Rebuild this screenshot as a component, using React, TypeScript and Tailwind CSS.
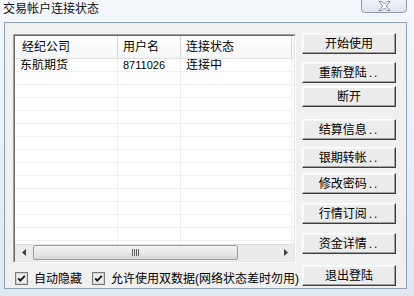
import React from 'react';

const rows = [
  { company: '东航期货', user: '8711026', status: '连接中' },
  ...Array.from({ length: 14 }, () => ({ company: '', user: '', status: '' })),
];

function Dots() {
  return <span className="ml-[2px] tracking-[2px]">..</span>;
}

function WinButton({ label, dots, className }: { label: string; dots?: boolean; className: string }) {
  return (
    <button
      className={
        'flex h-[21px] w-[94px] shrink-0 items-center justify-center border border-t-white border-l-white border-r-[#3c3c3c] border-b-[#3c3c3c] bg-[#ececec] text-[12px] leading-none text-black shadow-[inset_-1px_-1px_0_#a0a0a0,inset_1px_1px_0_#f8f8f8] ' +
        className
      }
    >
      <span>{label}</span>
      {dots && <Dots />}
    </button>
  );
}

function CheckBox() {
  return (
    <svg width="13" height="13" viewBox="0 0 13 13" className="shrink-0">
      <rect x="0.5" y="0.5" width="12" height="12" fill="#fdfdfd" stroke="#7a7a7a" />
      <rect x="1.5" y="1.5" width="10" height="10" fill="#ededed" stroke="#d4d4d4" />
      <path d="M3.2 6.4 L5.3 8.6 L9.8 3.8" fill="none" stroke="#111" strokeWidth="1.8" />
    </svg>
  );
}

function ScrollBar() {
  return (
    <div className="flex h-[17px] shrink-0 bg-[#ebebeb] shadow-[inset_0_1px_0_#e0e0e0]">
      <div className="flex w-[17px] items-center justify-center">
        <svg width="4" height="7" viewBox="0 0 4 7">
          <path d="M4 0 L0 3.5 L4 7 Z" fill="#404040" />
        </svg>
      </div>
      <div className="my-[1px] ml-[1px] flex w-[205px] items-center justify-center rounded-[2px] border border-[#9a9a9a] bg-gradient-to-b from-[#f4f4f4] via-[#e8e8e8] to-[#d6d6d6]">
        <div className="flex gap-[1px]">
          <div className="h-[7px] w-[1px] bg-[#5e5e5e]" />
          <div className="h-[7px] w-[1px] bg-[#5e5e5e]" />
          <div className="h-[7px] w-[1px] bg-[#5e5e5e]" />
          <div className="h-[7px] w-[1px] bg-[#5e5e5e]" />
        </div>
      </div>
      <div className="flex-1" />
      <div className="flex w-[17px] items-center justify-center">
        <svg width="4" height="7" viewBox="0 0 4 7">
          <path d="M0 0 L4 3.5 L0 7 Z" fill="#404040" />
        </svg>
      </div>
    </div>
  );
}

export default function App() {
  return (
    <div className="h-[296px] w-[414px] overflow-hidden bg-gradient-to-b from-[#f4f7fb] to-[#dfe8f1] font-['Liberation_Sans','Noto_Sans_CJK_SC',sans-serif] text-black">
      {/* Title bar */}
      <div className="flex h-[22px] items-start justify-between">
        <span className="ml-[3px] mt-[2px] text-[12px] leading-[14px] text-[#111]">交易帐户连接状态</span>
        <div className="mr-[7px] mt-[-2px] flex h-[15px] w-[46px] items-center justify-center rounded-b-[4px] border border-[#8e9bab] bg-gradient-to-b from-[#f2f5f9] to-[#dde5ee]">
          <svg width="13" height="10" viewBox="0 0 13 10" className="mt-[1px]">
            <path
              d="M1 0.5 H4 L6.5 3 L9 0.5 H12 L8.2 5 L12 9.5 H9 L6.5 7 L4 9.5 H1 L4.8 5 Z"
              fill="#f6f8fb"
              stroke="#7d8796"
              strokeWidth="0.9"
            />
          </svg>
        </div>
      </div>

      {/* Client area */}
      <div className="ml-[4px] h-[267px] w-[403px] overflow-hidden border border-[#8ea0b4] bg-[#f0f0f0]">
        <div className="flex pl-[8px] pt-[11px]">
          {/* Left column */}
          <div className="flex w-[283px] shrink-0 flex-col">
            <div className="h-[229px] w-[283px] border border-t-[#a0a0a0] border-l-[#a0a0a0] border-r-white border-b-white">
              <div className="flex h-full flex-col border border-t-[#696969] border-l-[#696969] border-r-[#e3e3e3] border-b-[#e3e3e3] bg-white">
                {/* Header */}
                <div className="flex h-[23px] shrink-0 border-b border-[#e2e2e2] bg-gradient-to-b from-white to-[#f5f6f7] text-[12px] leading-none">
                  <div className="flex w-[103px] items-center border-r border-[#d5d5d5] pl-[7px]">经纪公司</div>
                  <div className="flex w-[63px] items-center border-r border-[#d5d5d5] pl-[5px]">用户名</div>
                  <div className="flex w-[111px] items-center border-r border-[#d5d5d5] pl-[5px]">连接状态</div>
                </div>
                {/* Rows */}
                <div className="flex-1 overflow-hidden">
                  {rows.map((r, i) => (
                    <div key={i} className="flex h-[13px] border-b border-[#efefef] text-[12px] leading-none">
                      <div className="flex w-[103px] items-center border-r border-[#efefef] pl-[5px]">{r.company}</div>
                      <div className="flex w-[63px] items-center border-r border-[#efefef] pl-[5px] text-[11px]">{r.user}</div>
                      <div className="flex w-[111px] items-center border-r border-[#efefef] pl-[5px]">{r.status}</div>
                    </div>
                  ))}
                </div>
                <ScrollBar />
              </div>
            </div>

            {/* Checkboxes */}
            <div className="mt-[9px] flex h-[13px] items-center whitespace-nowrap text-[12px] leading-none">
              <div className="ml-[2px] flex shrink-0 items-center gap-[6px]">
                <CheckBox />
                <span>自动隐藏</span>
              </div>
              <div className="ml-[10px] flex shrink-0 items-center gap-[6px]">
                <CheckBox />
                <span>允许使用双数据(网络状态差时勿用)</span>
              </div>
            </div>
          </div>

          {/* Buttons */}
          <div className="ml-[6px] flex w-[94px] shrink-0 flex-col">
            <WinButton label="开始使用" className="mt-[-1px]" />
            <WinButton label="重新登陆" dots className="mt-[8px]" />
            <WinButton label="断开" className="mt-[3px]" />
            <WinButton label="结算信息" dots className="mt-[12px]" />
            <WinButton label="银期转帐" dots className="mt-[7px]" />
            <WinButton label="修改密码" dots className="mt-[5px]" />
            <WinButton label="行情订阅" dots className="mt-[9px]" />
            <WinButton label="资金详情" dots className="mt-[9px]" />
            <WinButton label="退出登陆" className="mt-[11px]" />
          </div>
        </div>
      </div>
    </div>
  );
}
